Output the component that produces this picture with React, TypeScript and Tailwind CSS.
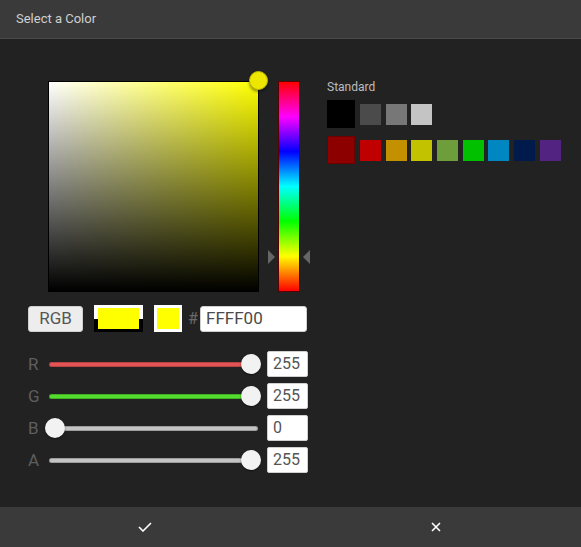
import { useState } from "react";

const grays = ["#4b4b4b", "#777777", "#c4c4c4"];
const colors = ["#c00000", "#c39100", "#c2c200", "#6e9e3c", "#00c000", "#0086c0", "#001a4c", "#532381"];

const channels = [
  { key: "R", value: 255, track: "bg-[#e55454]", pos: 100 },
  { key: "G", value: 255, track: "bg-[#54dd2e]", pos: 100 },
  { key: "B", value: 0, track: "bg-[#c4c4c4]", pos: 0 },
  { key: "A", value: 255, track: "bg-[#c4c4c4]", pos: 100 },
];

function SliderRow({ label, value, track, pos }: { label: string; value: number; track: string; pos: number }) {
  return (
    <div className="flex h-[26px] items-center">
      <span className="w-[21px] text-[17px] leading-none text-[#5e5e5e]">{label}</span>
      <div className="relative h-[26px] w-[209px]">
        <div className={`absolute left-0 right-0 top-[11px] h-[5px] rounded-full border border-black/20 ${track}`} />
        <div
          className="absolute top-[3px] h-[20px] w-[20px] -translate-x-1/2 rounded-full bg-[#f2f2f2] shadow-[0_1px_2px_rgba(0,0,0,0.5)]"
          style={{ left: `${pos === 0 ? 6 : 202}px` }}
        />
      </div>
      <div className="ml-[9px] flex h-[26px] w-[41px] items-center rounded-[2px] border border-[#cfcfcf] bg-white pl-[5px] text-[16px] text-[#555]">
        {value}
      </div>
    </div>
  );
}

export default function App() {
  const [hex] = useState("FFFF00");

  return (
    <div className="flex h-[547px] w-[581px] flex-col bg-[#222222] font-['Roboto',sans-serif]">
      <div className="flex h-[39px] items-center border-b border-[#4a4a4a] bg-[#3a3a3a] pl-[16px] text-[13px] text-[#cfcfcf]">
        Select a Color
      </div>

      <div className="flex flex-1 pl-[28px]">
        <div className="flex w-[280px] flex-col pt-[42px]">
          <div className="flex">
            <div className="relative ml-[20px] h-[211px] w-[211px] border border-black bg-[linear-gradient(to_top,#000,transparent),linear-gradient(to_right,#fff,#ff0)]">
              <div className="absolute -right-[10px] -top-[11px] h-[19px] w-[19px] rounded-full border border-[#bdb500] bg-[#ece600] shadow-[0_2px_3px_rgba(0,0,0,0.4)]" />
            </div>
            <div className="relative ml-[19px] h-[211px] w-[22px] border border-[#5a0000] bg-[linear-gradient(to_bottom,#f00,#f0f,#00f,#0ff,#0f0,#ff0,#f00)]">
              <div className="absolute -left-[11px] top-[168px] h-0 w-0 border-y-[7px] border-l-[7px] border-y-transparent border-l-[#666]" />
              <div className="absolute -right-[11px] top-[168px] h-0 w-0 border-y-[7px] border-r-[7px] border-y-transparent border-r-[#666]" />
            </div>
          </div>

          <div className="mt-[13px] flex h-[27px] items-center">
            <button className="flex h-[26px] w-[55px] items-center justify-center rounded-[3px] border border-[#cfcfcf] bg-[#ededed] text-[17px] text-[#555]">
              RGB
            </button>
            <div className="ml-[11px] h-[27px] w-[49px] bg-[linear-gradient(to_bottom,#fff_50%,#000_50%)] px-[4px] pt-[3px] pb-[3px]">
              <div className="h-full w-full bg-[#ffff00]" />
            </div>
            <div className="ml-[11px] h-[27px] w-[28px] bg-white p-[3px]">
              <div className="h-full w-full bg-[#ffff00]" />
            </div>
            <span className="ml-[6px] w-[12px] text-[16px] text-[#6a6a6a]">#</span>
            <div className="flex h-[26px] w-[107px] items-center rounded-[3px] border border-[#cfcfcf] bg-white pl-[5px] text-[17px] text-[#4a4a4a]">
              {hex}
            </div>
          </div>

          <div className="mt-[19px] flex flex-col gap-[6px]">
            {channels.map((c) => (
              <SliderRow key={c.key} label={c.key} value={c.value} track={c.track} pos={c.pos} />
            ))}
          </div>
        </div>

        <div className="ml-[19px] flex flex-col pt-[39px]">
          <div className="text-[12px] text-[#bdbdbd]">Standard</div>
          <div className="mt-[4px] flex items-center gap-[4.7px]">
            <div className="mr-[0.3px] h-[28px] w-[28px] bg-black" />
            {grays.map((g) => (
              <div key={g} className="h-[21px] w-[21px]" style={{ backgroundColor: g }} />
            ))}
          </div>
          <div className="mt-[8px] flex items-center gap-[4.7px]">
            <div className="mr-[0.3px] h-[28px] w-[28px] border border-[#6a0000] bg-[#8d0000]" />
            {colors.map((c) => (
              <div key={c} className="h-[21px] w-[21px]" style={{ backgroundColor: c }} />
            ))}
          </div>
        </div>
      </div>

      <div className="flex h-[40px] bg-[#3a3a3a]">
        <button className="flex flex-1 items-center justify-center">
          <svg width="14" height="10" viewBox="0 0 14 10" fill="none">
            <path d="M1 5l4 4L13 1" stroke="#fff" strokeWidth="1.6" />
          </svg>
        </button>
        <button className="flex flex-1 items-center justify-center">
          <svg width="10" height="10" viewBox="0 0 10 10" fill="none">
            <path d="M1 1l8 8M9 1l-8 8" stroke="#fff" strokeWidth="1.6" />
          </svg>
        </button>
      </div>
    </div>
  );
}
